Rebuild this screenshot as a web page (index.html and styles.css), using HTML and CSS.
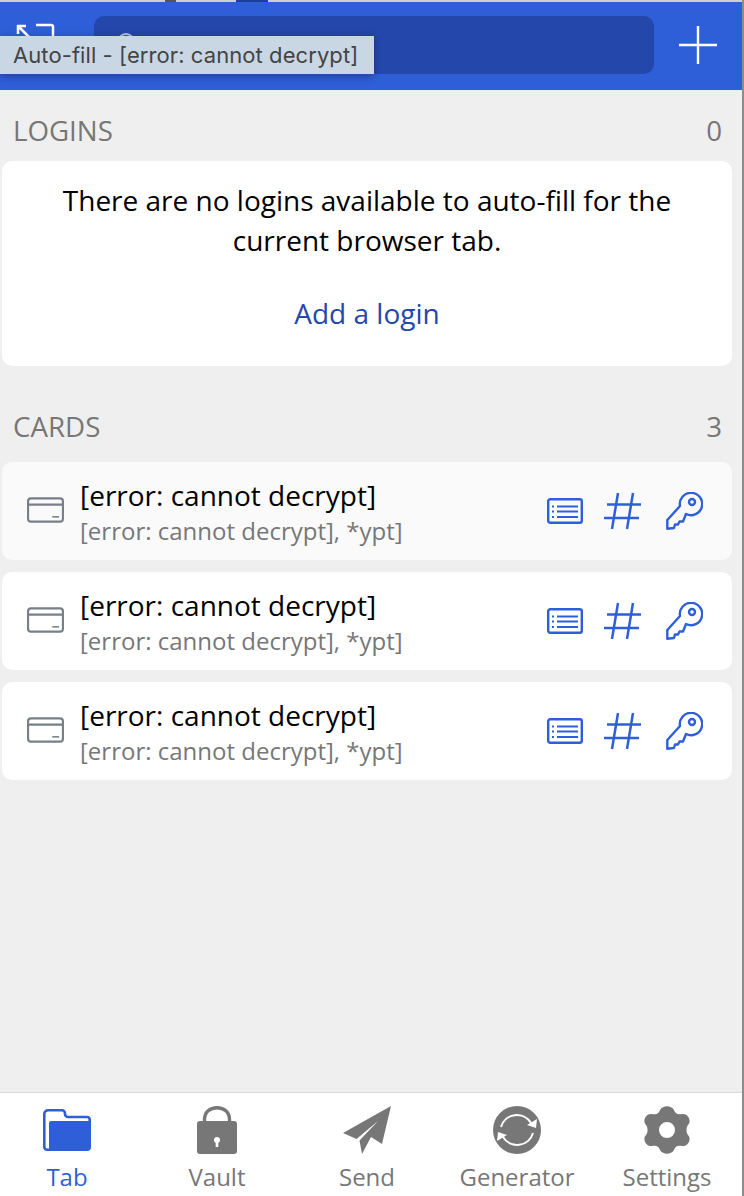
FILE: index.html
```html
<!DOCTYPE html>
<html lang="en">

<head>
    <meta charset="UTF-8">
    <title>Tab</title>
    <link rel="stylesheet" href="styles.css">
</head>

<body>
    <svg class="defs">
        <symbol id="i-card" viewBox="0 0 38 26">
            <g fill="none" stroke="#777f88" stroke-width="2.2">
                <rect x="1.1" y="1.1" width="35.8" height="23.8" rx="3"/>
                <path d="M1 7.500H37"/>
                <path d="M26 20H33" stroke-width="1.6"/>
            </g>
        </symbol>
        <symbol id="i-list" viewBox="0 0 36 26">
            <g fill="none" stroke="#2f5fd8">
                <rect x="1.200" y="1.200" width="33.600" height="23.600" rx="2" stroke-width="2.400"/>
                <path d="M10 8.500H31M10 13.500H31M10 19H31" stroke-width="2"/>
                <path d="M5 8.500H7M5 13.500H7M5 19H7" stroke-width="1.800"/>
            </g>
        </symbol>
        <symbol id="i-hash" viewBox="0 0 37 38">
            <path d="M14 1L8 37M29 1L23 37M3 12.500H37M0 26H35" fill="none" stroke="#2f5fd8" stroke-width="2.500"/>
        </symbol>
        <symbol id="i-key" viewBox="0 0 37 38">
            <g fill="none" stroke="#2f5fd8" stroke-width="2.400" stroke-linejoin="round">
                <path d="M14 14L1.300 28V36.700L8 36L9 32.500H12L13.500 29.500H17L20 22A11.200 11.200 0 1 0 14 14Z"/>
                <circle cx="26" cy="10" r="3"/>
            </g>
        </symbol>
    </svg>

    <div id="popup">
        <div class="top-strip"></div>
        <header class="top-bar">
            <div class="icon-slot">
                <svg width="40" height="40" viewBox="0 0 40 40" fill="none" stroke="#fff" stroke-width="2.500">
                    <path d="M21 2H36a2 2 0 0 1 2 2V16"/>
                    <path d="M3 3L15 15M3 2V11M2 3H11"/>
                </svg>
            </div>
            <div class="search-box">
                <svg class="search-icon" width="24" height="24" viewBox="0 0 24 24" fill="none" stroke="#b5c5ea" stroke-width="2">
                    <circle cx="11" cy="11" r="8"/>
                    <path d="M17 17L22 22"/>
                </svg>
            </div>
            <div class="add-slot">
                <svg width="38" height="38" viewBox="0 0 38 38" stroke="#fff" stroke-width="2.400">
                    <path d="M19 0V38M0 19H38"/>
                </svg>
            </div>
            <div class="tooltip">Auto-fill - [error: cannot decrypt]</div>
        </header>

        <main class="content">
            <section class="group">
                <div class="group-head"><span>LOGINS</span><span>0</span></div>
                <div class="empty-card">
                    <p>There are no logins available to auto-fill for the current browser tab.</p>
                    <a href="#">Add a login</a>
                </div>
            </section>

            <section class="group">
                <div class="group-head"><span>CARDS</span><span>3</span></div>
                <div class="card-list">
                    <div class="card-row hover">
                        <svg class="card-icon"><use href="#i-card"/></svg>
                        <div class="card-text">
                            <div class="card-name">[error: cannot decrypt]</div>
                            <div class="card-sub">[error: cannot decrypt], *ypt]</div>
                        </div>
                        <div class="card-actions">
                            <svg class="act-list"><use href="#i-list"/></svg>
                            <svg class="act-hash"><use href="#i-hash"/></svg>
                            <svg class="act-key"><use href="#i-key"/></svg>
                        </div>
                    </div>
                    <div class="card-row">
                        <svg class="card-icon"><use href="#i-card"/></svg>
                        <div class="card-text">
                            <div class="card-name">[error: cannot decrypt]</div>
                            <div class="card-sub">[error: cannot decrypt], *ypt]</div>
                        </div>
                        <div class="card-actions">
                            <svg class="act-list"><use href="#i-list"/></svg>
                            <svg class="act-hash"><use href="#i-hash"/></svg>
                            <svg class="act-key"><use href="#i-key"/></svg>
                        </div>
                    </div>
                    <div class="card-row">
                        <svg class="card-icon"><use href="#i-card"/></svg>
                        <div class="card-text">
                            <div class="card-name">[error: cannot decrypt]</div>
                            <div class="card-sub">[error: cannot decrypt], *ypt]</div>
                        </div>
                        <div class="card-actions">
                            <svg class="act-list"><use href="#i-list"/></svg>
                            <svg class="act-hash"><use href="#i-hash"/></svg>
                            <svg class="act-key"><use href="#i-key"/></svg>
                        </div>
                    </div>
                </div>
            </section>
        </main>

        <nav class="tab-bar">
            <div class="tab active">
                <svg width="48" height="48" viewBox="0 0 48 42">
                    <path d="M5 1.300H19a3 3 0 0 1 3 3V5a3 3 0 0 0 3 3H44a2.700 2.700 0 0 1 2.700 2.700V38a2.700 2.700 0 0 1-2.700 2.700H4A2.700 2.700 0 0 1 1.300 38V5A3.700 3.700 0 0 1 5 1.300Z" fill="#fff" stroke="#2f5fd8" stroke-width="2.600"/>
                    <path d="M6 40V14A2 2 0 0 1 8 12H47V38A2 2 0 0 1 45 40Z" fill="#2f5fd8"/>
                </svg>
                <span>Tab</span>
            </div>
            <div class="tab">
                <svg width="40" height="48" viewBox="0 0 40 48">
                    <path d="M7.500 18V14C7.500 6 13 1.700 20 1.700S32.500 6 32.500 14V18" fill="none" stroke="#777" stroke-width="3.400"/>
                    <path d="M3 15H37A3 3 0 0 1 40 18V45A3 3 0 0 1 37 48H3A3 3 0 0 1 0 45V18A3 3 0 0 1 3 15Z" fill="#777"/>
                    <circle cx="20" cy="34" r="3" fill="#fff"/>
                    <rect x="18.700" y="34" width="2.600" height="7" fill="#fff"/>
                </svg>
                <span>Vault</span>
            </div>
            <div class="tab">
                <svg width="48" height="48" viewBox="0 0 48 48">
                    <path d="M48 0L39 38L28 31L19 48L16.500 34.500L35 15L13.500 33L0 27Z" fill="#777"/>
                </svg>
                <span>Send</span>
            </div>
            <div class="tab">
                <svg width="48" height="48" viewBox="0 0 48 48">
                    <circle cx="24" cy="24" r="24" fill="#777"/>
                    <path d="M8 21A16.500 16.500 0 0 1 38 17" fill="none" stroke="#fff" stroke-width="2"/>
                    <path d="M34 19L43 22L44 13Z" fill="#fff"/>
                    <path d="M40 27A16.500 16.500 0 0 1 10 31" fill="none" stroke="#fff" stroke-width="2"/>
                    <path d="M14 29L5 26L4 35Z" fill="#fff"/>
                </svg>
                <span>Generator</span>
            </div>
            <div class="tab">
                <svg width="46" height="48" viewBox="0 0 46 48">
                    <path d="M23 16a8 8 0 1 0 0 16a8 8 0 1 0 0-16ZM16 4C19-1 27-1 30 4C31 7 33 9 38 8C44 7 48 15 44 19C42 21 42 27 44 29C48 33 44 41 38 40C33 39 31 41 30 44C27 49 19 49 16 44C15 41 13 39 8 40C2 41-2 33 2 29C4 27 4 21 2 19C-2 15 2 7 8 8C13 9 15 7 16 4Z" fill="#777" fill-rule="evenodd"/>
                </svg>
                <span>Settings</span>
            </div>
        </nav>
    </div>
</body>

</html>
```

FILE: styles.css
```css
body {
    margin: 0;
    font-family: "Open Sans", sans-serif;
    background: #8c8c8c;
}

.defs {
    display: none;
}

#popup {
    display: flex;
    flex-direction: column;
    width: 742px;
    height: 1196px;
    overflow: hidden;
    background: #efefef;
}

.top-strip {
    height: 2px;
    background: linear-gradient(to right, #cfcfcf 165px, #555 165px, #555 176px, #cfcfcf 176px, #cfcfcf 236px, #1d3f9c 236px, #1d3f9c 268px, #cfcfcf 268px);
}

.top-bar {
    position: relative;
    display: flex;
    align-items: center;
    height: 88px;
    flex-shrink: 0;
    background: #2f5fd8;
}

.icon-slot {
    display: flex;
    width: 94px;
    height: 40px;
    margin-top: -6px;
    padding-left: 15px;
    box-sizing: border-box;
}

.search-box {
    display: flex;
    align-items: center;
    width: 560px;
    height: 58px;
    margin-top: -2px;
    padding-left: 21px;
    box-sizing: border-box;
    background: #2447ab;
    border-radius: 10px;
}

.search-icon {
    margin-top: -4px;
}

.add-slot {
    flex: 1;
    display: flex;
    justify-content: center;
    margin-top: -2px;
}

.tooltip {
    position: absolute;
    left: 0;
    top: 34px;
    width: 374px;
    height: 38px;
    box-sizing: border-box;
    padding-left: 13px;
    font-family: Inter, sans-serif;
    font-size: 22px;
    line-height: 38px;
    letter-spacing: 0.08px;
    color: #444;
    white-space: nowrap;
    background: #c9d6e4;
    box-shadow: 0 2px 8px rgba(0, 0, 0, 0.35);
}

.content {
    flex: 1;
    padding: 0 10px 0 2px;
}

.group-head {
    display: flex;
    justify-content: space-between;
    padding: 0 10px 0 11px;
    font-size: 27.7px;
    line-height: 34px;
    color: #777;
}

.group:first-child .group-head {
    margin-top: 23px;
    margin-bottom: 14px;
}

.group:nth-child(2) {
    margin-top: 43px;
}

.group:nth-child(2) .group-head {
    margin-bottom: 19px;
}

.empty-card {
    height: 205px;
    box-sizing: border-box;
    padding: 19px 40px;
    text-align: center;
    background: #fff;
    border-radius: 10px;
    font-size: 28px;
    line-height: 40px;
    color: #000;
}

.empty-card p {
    margin: 0 0 33px;
}

.empty-card a {
    color: #2447ab;
    text-decoration: none;
}

.card-list {
    display: flex;
    flex-direction: column;
    gap: 12px;
}

.card-row {
    display: flex;
    align-items: center;
    height: 98px;
    box-sizing: border-box;
    padding: 0 29px 0 25px;
    background: #fff;
    border-radius: 10px;
}

.card-row.hover {
    background: #fafafa;
}

.card-icon {
    flex-shrink: 0;
    width: 37px;
    height: 26px;
    margin-top: -2px;
}

.card-text {
    flex: 1;
    margin-left: 16px;
    padding-top: 3px;
}

.card-name {
    font-size: 28px;
    line-height: 37px;
    color: #000;
}

.card-sub {
    font-size: 24px;
    line-height: 34px;
    color: #777;
}

.card-actions {
    display: flex;
    align-items: center;
}

.act-list {
    width: 36px;
    height: 26px;
}

.act-hash {
    width: 37px;
    height: 38px;
    margin-left: 21px;
}

.act-key {
    width: 37px;
    height: 38px;
    margin-left: 25px;
}

.tab-bar {
    display: flex;
    gap: 16px;
    height: 103px;
    flex-shrink: 0;
    padding-right: 8px;
    background: #fff;
    border-top: 1px solid #d9d9d9;
}

.tab {
    flex: 1;
    display: flex;
    flex-direction: column;
    align-items: center;
    padding-top: 13px;
    color: #777;
    font-size: 24px;
    line-height: 32px;
}

.tab svg {
    height: 48px;
}

.tab span {
    margin-top: 7px;
    white-space: nowrap;
}

.tab.active {
    color: #2f5fd8;
}
```
